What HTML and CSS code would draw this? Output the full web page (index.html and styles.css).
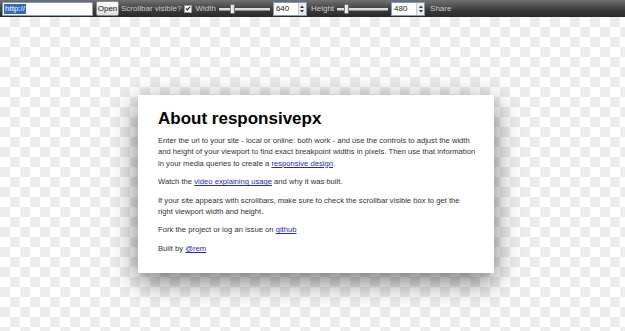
FILE: index.html
```html
<!DOCTYPE html>
<html>
<head>
<meta charset="utf-8">
<title>responsivepx</title>
<link rel="stylesheet" href="styles.css">
</head>
<body>
<div class="toolbar">
  <div class="url"><span class="sel">http://</span></div>
  <div class="btn">Open</div>
  <span class="lbl lbl-sb">Scrollbar visible?</span>
  <span class="check"><svg width="8" height="8" viewBox="0 0 8 8"><path d="M1.5 4 L3.2 5.8 L6.6 1.8" fill="none" stroke="#222" stroke-width="1.6"/></svg></span>
  <span class="lbl lbl-w">Width</span>
  <div class="slider"><span class="track"></span><span class="thumb thumb-w"></span></div>
  <div class="num"><span class="val">640</span><span class="spin"><svg width="6" height="12" viewBox="0 0 6 12"><path d="M1 5 L3 2.5 L5 5 Z M1 7 L3 9.5 L5 7 Z" fill="#333"/></svg></span></div>
  <span class="lbl lbl-h">Height</span>
  <div class="slider"><span class="track"></span><span class="thumb thumb-h"></span></div>
  <div class="num"><span class="val">480</span><span class="spin"><svg width="6" height="12" viewBox="0 0 6 12"><path d="M1 5 L3 2.5 L5 5 Z M1 7 L3 9.5 L5 7 Z" fill="#333"/></svg></span></div>
  <span class="lbl lbl-share">Share</span>
</div>
<div class="stage">
  <div class="card">
    <h1>About responsivepx</h1>
    <p>Enter the url to your site - local or online: both work - and use the controls to adjust the width and height of your viewport to find exact breakpoint widths in pixels. Then use that information in your media queries to create a <a href="#">responsive design</a>.</p>
    <p>Watch the <a href="#">video explaining usage</a> and why it was built.</p>
    <p>If your site appears with scrollbars, make sure to check the scrollbar visible box to get the right viewport width and height.</p>
    <p>Fork the project or log an issue on <a href="#">github</a></p>
    <p>Built by <a href="#">@rem</a></p>
  </div>
</div>
</body>
</html>
```
FILE: styles.css
```css
html, body {
  margin: 0;
  padding: 0;
  height: 100%;
}
body {
  font-family: "Liberation Sans", Arial, sans-serif;
  background-color: #fff;
  background-image:
    linear-gradient(45deg, #ececec 25%, transparent 25%, transparent 75%, #ececec 75%),
    linear-gradient(45deg, #ececec 25%, transparent 25%, transparent 75%, #ececec 75%);
  background-size: 20px 20px;
  background-position: 0 17px, 10px 27px;
  overflow: hidden;
}
.toolbar {
  height: 17px;
  background: linear-gradient(#717171, #3a3a3a 60%, #2a2a2a);
  display: flex;
  align-items: center;
  font-size: 8px;
  color: #cfcfcf;
  box-sizing: border-box;
}
.url {
  margin-left: 2px;
  width: 88px;
  height: 12px;
  background: #fff;
  border: 1px solid #7f9db9;
  display: flex;
  align-items: center;
  padding-left: 1px;
}
.sel {
  background: #316ac5;
  color: #fff;
  line-height: 10px;
  padding: 0 1px;
}
.btn {
  margin-left: 3px;
  width: 23px;
  height: 15px;
  background: linear-gradient(#fafafa, #e2e2e2);
  border: 1px solid #888;
  border-radius: 2px;
  color: #111;
  display: flex;
  align-items: center;
  justify-content: center;
  box-sizing: border-box;
  font-size: 8px;
}
.lbl-sb { margin-left: 2px; }
.check {
  margin-left: 3px;
  width: 8px;
  height: 8px;
  background: #fff;
  border: 1px solid #999;
  box-sizing: border-box;
  display: flex;
  align-items: center;
  justify-content: center;
}
.check svg { display: block; width: 7px; height: 7px; }
.lbl-w { margin-left: 3px; }
.slider {
  position: relative;
  margin-left: 3px;
  width: 51px;
  height: 12px;
}
.track {
  position: absolute;
  left: 0;
  right: 0;
  top: 5px;
  height: 2px;
  background: #ddd;
  border-bottom: 1px solid #888;
}
.thumb {
  position: absolute;
  top: 1px;
  width: 5px;
  height: 10px;
  background: linear-gradient(90deg, #fff, #d8d8d8);
  border: 1px solid #777;
  box-sizing: border-box;
  border-radius: 1px;
}
.thumb-w { left: 11px; }
.thumb-h { left: 7px; }
.num {
  margin-left: 3px;
  width: 34px;
  height: 14px;
  background: #fff;
  border: 1px solid #7f9db9;
  box-sizing: border-box;
  display: flex;
  align-items: center;
  justify-content: space-between;
  color: #222;
}
.val { padding-left: 2px; }
.spin {
  width: 7px;
  height: 12px;
  background: #ececec;
  border-left: 1px solid #ccc;
  display: flex;
  align-items: center;
  justify-content: center;
}
.spin svg { display: block; }
.lbl-h { margin-left: 4px; }
.lbl-share { margin-left: 5px; }

.stage {
  padding-top: 78px;
  padding-left: 138px;
}
.card {
  width: 356px;
  height: 178px;
  box-sizing: border-box;
  background: #fff;
  padding: 14px 18px 0 20px;
  box-shadow: 0 8px 26px rgba(0, 0, 0, 0.55);
  color: #333;
}
h1 {
  margin: 0 0 6px 0;
  font-size: 17px;
  line-height: 20px;
  color: #000;
  font-weight: bold;
}
p {
  margin: 0 0 7px 0;
  font-size: 7.65px;
  line-height: 11.4px;
}
a {
  color: #2a2ab8;
  text-decoration: underline;
}
```
